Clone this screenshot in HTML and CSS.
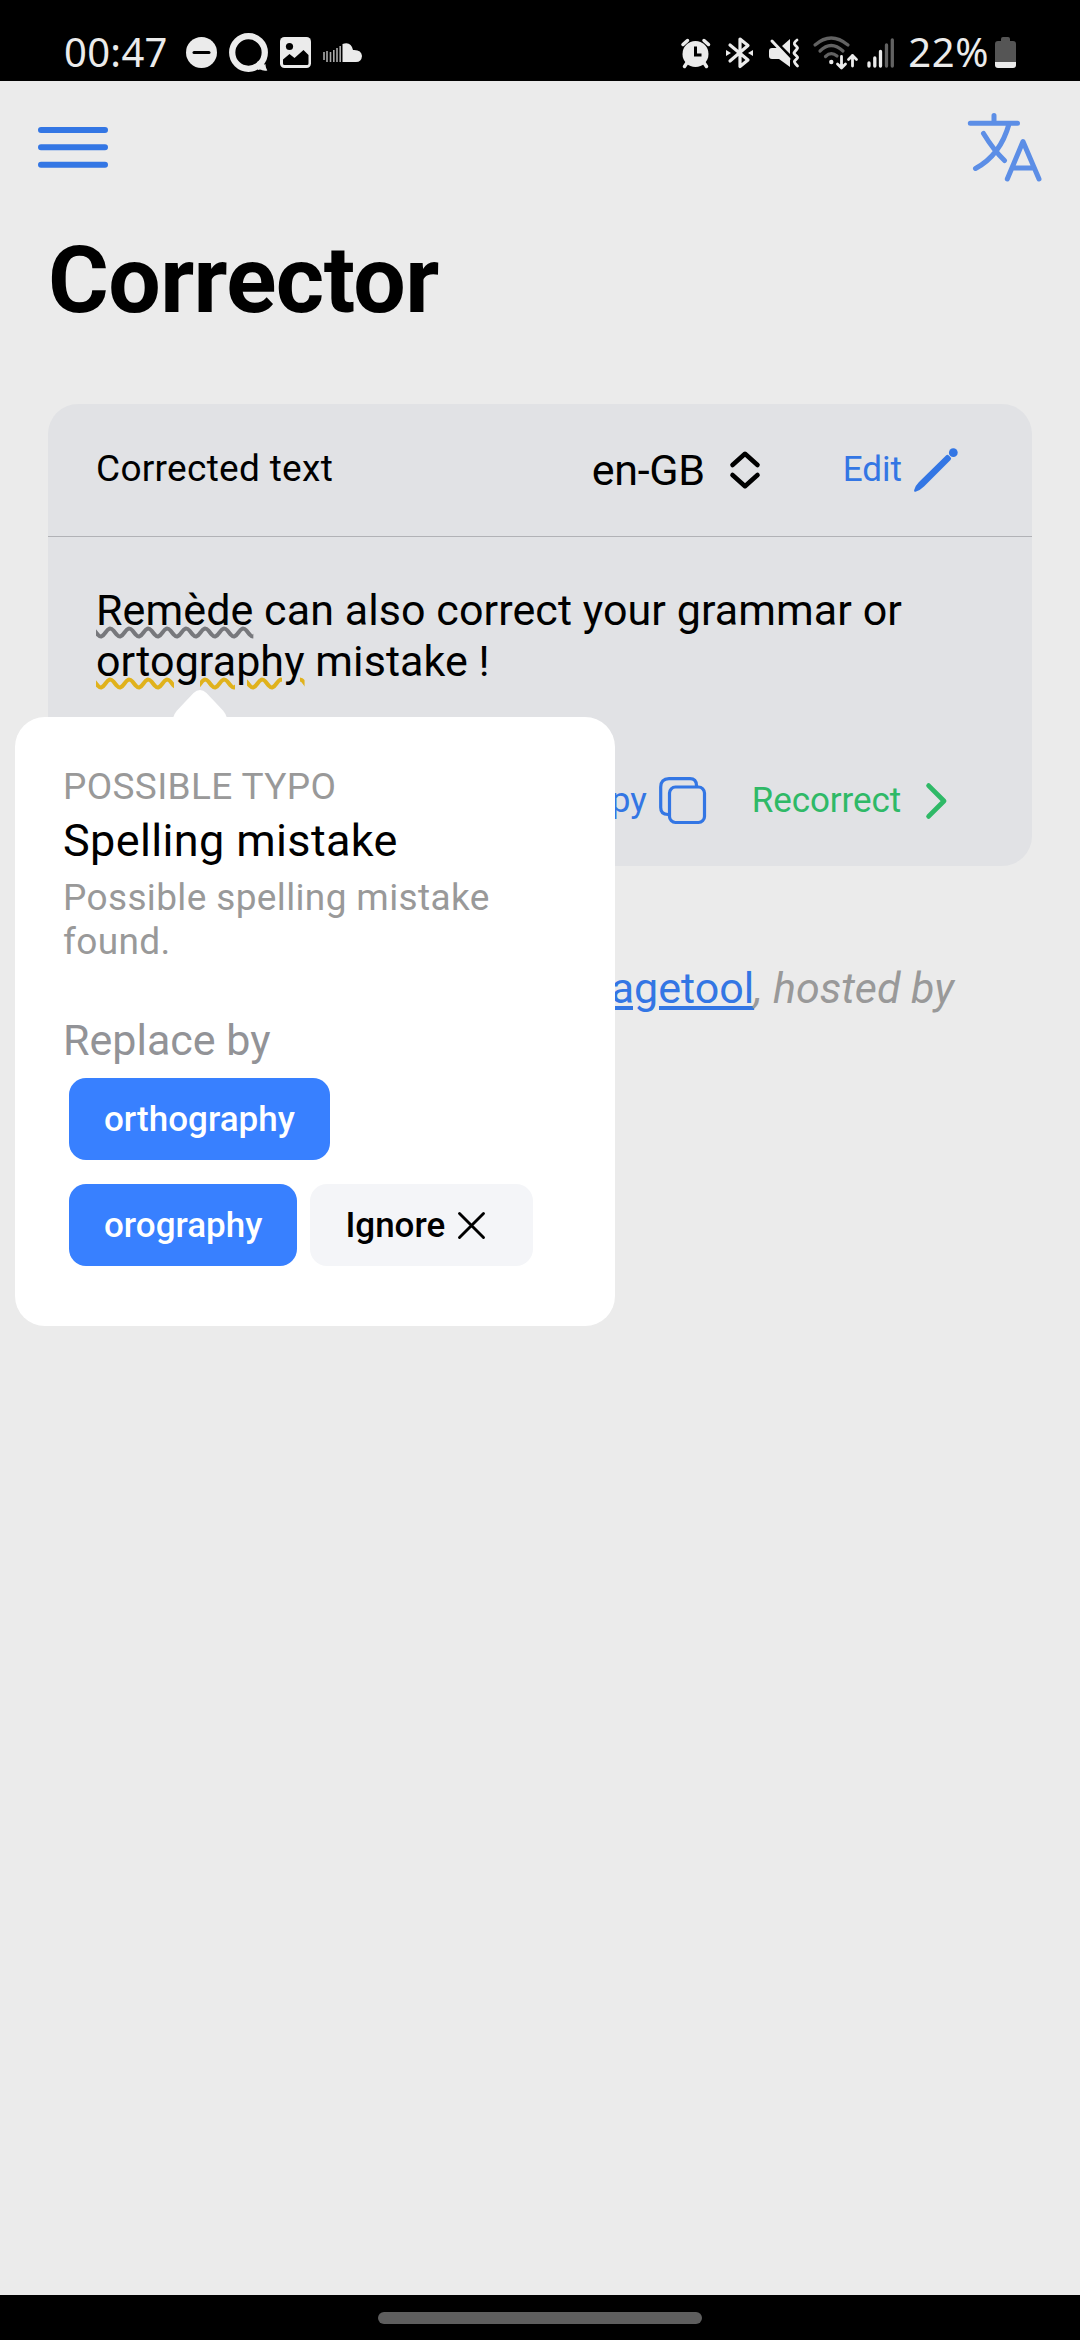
FILE: index.html
```html
<!DOCTYPE html>
<html lang="en">
<head>
<meta charset="utf-8">
<title>Corrector</title>
<link rel="stylesheet" href="styles.css">
</head>
<body>
<div class="status">
  <div class="status-group status-left">
    <span class="clock">00:47</span>
    <svg class="dnd" width="31" height="31" viewBox="0 0 31 31"><circle cx="15.5" cy="15.5" r="15.5" fill="#ebebeb"/><path d="M8 15.5h15" stroke="#000" stroke-width="3" stroke-linecap="round"/></svg>
    <svg class="bubble" width="39" height="39" viewBox="0 0 39 39"><path d="M36.5 31Q36 34 38.300 37.500Q34 38.300 30.500 36" fill="#ebebeb"/><circle cx="19.500" cy="19.500" r="16.300" fill="none" stroke="#ebebeb" stroke-width="6.300"/><path d="M28 29l5-3 4 9-8 2z" fill="#ebebeb"/></svg>
    <svg class="photo" width="31" height="31" viewBox="0 0 31 31"><rect width="31" height="31" rx="4.500" fill="#ebebeb"/><circle cx="9.500" cy="9.500" r="3.600"/><path d="M3 22.500L9.500 17l5 4L23.500 13l5 5v8.500q0 1.500-1.500 1.500h-22.500q-1.500 0-1.500-1.500z"/></svg>
    <svg class="cloud" width="39" height="19" viewBox="0 0 39 19"><path d="M19.500 1Q28 -2 30 7Q38.500 6.500 39 13Q38.500 19 33 19H19.500z" fill="#ebebeb"/><path d="M1 9v8M4 8v11M7.500 9v10M10.800 7v12M14 5v14M17.200 3v16" stroke="#aaa" stroke-width="1.600"/></svg>
  </div>
  <div class="status-group status-right">
    <svg class="alarm" width="30" height="30" viewBox="0 0 30 30"><circle cx="14.500" cy="16" r="13" fill="#ebebeb"/><path d="M6.500 24l-3 4.500M22.500 24l3 4.500M2 6.500l4.500-4M27.500 6.500l-4.500-4" stroke="#ebebeb" stroke-width="3.500" stroke-linecap="round"/><path d="M14.500 8.500v8.500h6" fill="none" stroke="#000" stroke-width="3"/></svg>
    <svg class="bluetooth" width="28" height="32" viewBox="0 0 28 32"><path d="M4 8L22 23L14 29.500V2L22 8.500L4 24" fill="none" stroke="#ebebeb" stroke-width="3.200" stroke-linejoin="round" stroke-linecap="round"/><path d="M0 13l5 3-5 3zM27 13l-5 3 5 3z" fill="#ebebeb"/></svg>
    <svg class="mute" width="31" height="30" viewBox="0 0 31 30"><path d="M3 10h7l11 12v7l-11-8H3Q0 21 0 18v-5Q0 10 3 10zM13 8l8-7v15z" fill="#ebebeb"/><path d="M3 3L20 21" stroke="#ebebeb" stroke-width="3" stroke-linecap="round"/><path d="M28 2q-4 3-2 5l2 2q1 1 0 2l-2.500 3q-1 1 0 2l2.500 2.500q1 1 0 2l-2.500 2.500q-1 1 3 5" fill="none" stroke="#ebebeb" stroke-width="2.800" stroke-linejoin="round" stroke-linecap="round"/></svg>
    <svg class="wifi" width="44" height="34" viewBox="0 0 44 34"><g fill="none" stroke="#626262" stroke-width="3.200" stroke-linecap="round"><path d="M2 9Q18-5 35 9M7 15Q18 4 30 15M12.500 20.500Q18 15 24 20"/></g><circle cx="18.300" cy="26" r="2.200" fill="#ebebeb"/><path d="M28.500 20.500V32M24.500 28l4 4 4-4M39.500 30V19.500M35.500 23.500l4-4 4 4" fill="none" stroke="#ebebeb" stroke-width="2.800" stroke-linejoin="round" stroke-linecap="round"/></svg>
    <svg class="signal" width="28" height="30" viewBox="0 0 28 30"><path d="M2 25v3M7.800 20v8M13.500 13.500V28" stroke="#ebebeb" stroke-width="3.300" stroke-linecap="round"/><path d="M19.500 7v21M25.300 2v26" stroke="#626262" stroke-width="3.300" stroke-linecap="round"/></svg>
    <span class="percent">22%</span>
    <svg class="battery" width="21" height="31" viewBox="0 0 21 31"><path d="M6 2Q6 0 8 0h5q2 0 2 2v2h3q3 0 3 3v18H0V7q0-3 3-3h3z" fill="#555"/><path d="M0 25h21v3q0 3-3 3H3q-3 0-3-3z" fill="#ebebeb"/></svg>
  </div>
</div>

<div class="toolbar">
  <svg width="70" height="40" viewBox="0 0 70 40"><path d="M3 3h64M3 20.300h64M3 37.700h64" stroke="#3376e4" stroke-width="6" stroke-linecap="round"/></svg>
  <svg width="75" height="69" viewBox="0 0 75 69"><g fill="none" stroke="#5c8ee6" stroke-width="5" stroke-linecap="round" stroke-linejoin="round"><path d="M3.300 10.300H50.500M27 2.500v7.500M16.500 20.500Q26.500 37 37.500 47.500M42 11Q33.500 42 8.500 55.500M40.300 66L56 28.500L72 66M45.500 55h21.500"/></g></svg>
</div>

<main class="page">
  <h1 class="title">Corrector</h1>
  <section class="card">
    <header class="card-head">
      <span class="card-label">Corrected text</span>
      <div class="language">en-GB
        <svg width="30" height="38" viewBox="0 0 30 38"><path d="M2.500 14L15 2.800L27.500 14M2.500 24L15 35.200L27.500 24" fill="none" stroke="#000" stroke-width="4.600" stroke-linecap="round" stroke-linejoin="round"/></svg>
      </div>
      <div class="action edit"><span class="edit-label">Edit</span>
        <svg width="44" height="44" viewBox="0 0 44 44"><circle cx="39.300" cy="4.700" r="4.400" fill="#3376e4"/><path d="M32 7.500q1.500-1.300 2.800 0l1.700 1.700q1.400 1.300 0 2.700L10 38.500q-4 4-8.500 5.200q-2 0-1.200-2Q1.500 37.500 5 34z" fill="#3376e4"/></svg>
      </div>
    </header>
    <div class="card-body">
      <p class="content"><span class="mark unknown">Remède</span> can also correct your grammar or <span class="mark typo">ortography</span> mistake !</p>
      <div class="actions">
        <div class="action copy">Copy
          <svg width="47" height="47" viewBox="0 0 47 47"><g fill="none" stroke="#3376e4" stroke-width="3.200"><rect x="10.500" y="10" width="35" height="35.500" rx="6"/><path d="M37.500 10V8.500Q37.500 1.700 31 1.700H10Q1.700 1.700 1.700 10v20.500Q1.700 37.500 9 37.500h1.500" /></g></svg>
        </div>
        <div class="action recorrect">Recorrect
          <svg width="21" height="36" viewBox="0 0 21 36"><path d="M2.600 2.600L18 18L2.600 33.400" fill="none" stroke="#2fb967" stroke-width="4.800" stroke-linecap="round" stroke-linejoin="round"/></svg>
        </div>
      </div>
    </div>
  </section>
  <p class="credit">Corrections by <a class="credit-link">Languagetool</a>, hosted by</p>
</main>

<aside class="popover">
  <svg class="popover-arrow" width="54" height="29" viewBox="0 0 54 29"><path d="M0 29Q1 25 4 21.500L20.500 4Q27-2 33.500 4L50 21.500Q53 25 54 29z" fill="#fff"/></svg>
  <p class="category">POSSIBLE TYPO</p>
  <h2 class="problem">Spelling mistake</h2>
  <p class="detail">Possible spelling mistake found.</p>
  <p class="replace">Replace by</p>
  <div class="choices">
    <span class="choice">orthography</span>
  </div>
  <div class="choices">
    <span class="choice">orography</span>
    <span class="choice ignore">Ignore
      <svg width="27" height="27" viewBox="0 0 27 27"><path d="M1.500 1.500l24 24M25.500 1.500l-24 24" stroke="#000" stroke-width="2.900" stroke-linecap="round"/></svg>
    </span>
  </div>
</aside>

<footer class="navbar"><span class="pill"></span></footer>
</body>
</html>
```

FILE: styles.css
```css
* { box-sizing: border-box; }
body {
  margin: 0;
  width: 1080px;
  height: 2340px;
  display: flex;
  flex-direction: column;
  position: relative;
  overflow: hidden;
  background: #ebebeb;
  color: #000;
  font-family: Roboto, "Liberation Sans", sans-serif;
}
h1, h2, p { margin: 0; font-weight: 400; }
svg { display: block; flex: none; overflow: visible; }

.status {
  height: 81px;
  padding: 24px 64px 0 64px;
  background: #000;
  color: #ebebeb;
  display: flex;
  justify-content: space-between;
  font-family: "Noto Sans", sans-serif;
  font-size: 40px;
  line-height: 55px;
}
.status-group { display: flex; align-items: center; }
.status-left { gap: 12px; }
.clock { width: 110px; padding-bottom: 2px; letter-spacing: 0.3px; }
.status-right { gap: 15px; }
.mute { margin-right: -2px; }
.wifi { margin-right: -5px; }
.signal { margin-right: -2px; }
.percent { margin-right: -9px; padding-bottom: 2px; letter-spacing: 0.6px; }

.toolbar {
  height: 132px;
  padding: 0 38px;
  display: flex;
  justify-content: space-between;
  align-items: center;
}

.page { flex: 1; padding: 0 48px; }
.title {
  font-size: 93px;
  line-height: 110px;
  font-weight: 700;
  letter-spacing: -0.6px;
  padding-top: 13px;
  height: 191px;
}
.card {
  height: 462px;
  border-radius: 30px;
  background: #e1e2e5;
}
.card-head {
  height: 133px;
  border-bottom: 1px solid #b1b2b6;
  padding: 0 74px 0 48px;
  display: flex;
  align-items: center;
}
.card-label { font-size: 37px; flex: 1; letter-spacing: 0.3px; padding-bottom: 3px; }
.language {
  display: flex;
  align-items: center;
  gap: 25px;
  font-size: 43px;
  letter-spacing: -0.3px;
  margin-right: 83px;
}
.action {
  display: flex;
  align-items: center;
  font-size: 35px;
  color: #3376e4;
}
.edit { gap: 12px; }
.edit-label { padding-bottom: 2px; }
.card-body { padding: 48px; }
.content { font-size: 43px; line-height: 51px; letter-spacing: 0.08px; }
.mark { text-decoration: underline wavy #77787c 4.2px; }
.typo { text-decoration-color: #e0b21c; }
.actions {
  display: flex;
  justify-content: flex-end;
  align-items: center;
  gap: 46px;
  padding: 90px 37px 0 0;
}
.copy { gap: 12px; }
.recorrect { gap: 25px; letter-spacing: -0.1px; color: #2fb967; }
.credit {
  margin-top: 97px;
  padding-right: 78px;
  text-align: right;
  font-size: 43px;
  line-height: 51px;
  font-style: italic;
  color: #999;
  white-space: nowrap;
}
.credit-link {
  font-style: normal;
  color: #3376e4;
  text-decoration: underline 4px;
  text-underline-offset: 3px;
}

.popover {
  position: absolute;
  left: 15px;
  top: 717px;
  width: 600px;
  height: 609px;
  padding: 48px;
  border-radius: 30px;
  background: #fff;
}
.popover-arrow { position: absolute; left: 158px; top: -28px; }
.category, .detail { font-size: 37px; line-height: 44px; letter-spacing: 0.36px; color: #999; }
.problem { font-size: 45px; line-height: 54px; letter-spacing: 0.36px; margin: 5px 0 8px; }
.replace { font-size: 43px; line-height: 52px; margin-top: 50px; color: #929397; }
.choices {
  display: flex;
  gap: 13px;
  margin: 12px 0 24px 6px;
}
.choices + .choices { margin-top: 0; }
.choice {
  height: 82px;
  padding: 0 35px;
  display: flex;
  align-items: center;
  border-radius: 17px;
  background: #3880ff;
  color: #fff;
  font-size: 35px;
  font-weight: 500;
}
.ignore { gap: 13px; padding-right: 48px; background: #f4f5f8; color: #000; }

.navbar {
  height: 45px;
  background: #000;
  padding-top: 1px;
  display: flex;
  align-items: center;
  justify-content: center;
}
.pill { width: 324px; height: 12px; border-radius: 6px; background: #5e5e5e; }
```
